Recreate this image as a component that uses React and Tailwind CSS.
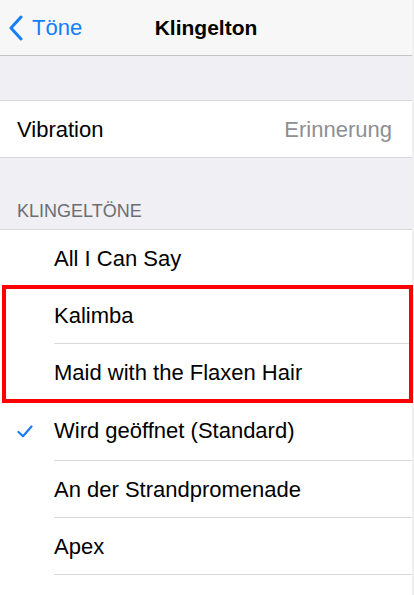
const font = { fontFamily: '"Liberation Sans", Arial, sans-serif' };

const Row = ({ label, checked, last, tall }) => (
  <div className={`flex ${tall ? "h-[60px]" : "h-[57px]"} items-stretch bg-white`}>
    <div className="flex w-[54px] shrink-0 items-center pl-[17px]">
      {checked && (
        <svg width="16" height="13" viewBox="0 0 16 13" fill="none">
          <path d="M1.5 7 L6 11.2 L14.5 1.5" stroke="#1a7cf5" strokeWidth="2.2" strokeLinecap="round" strokeLinejoin="round" />
        </svg>
      )}
    </div>
    <div className={`flex flex-1 items-center text-[22px] text-black ${last ? "" : "border-b border-[#dadade]"}`}>
      {label}
    </div>
  </div>
);

export default function App() {
  return (
    <div className="flex h-[595px] w-[414px] overflow-hidden bg-[#f0f0f0]" style={font}>
      <div className="flex w-[412px] flex-col bg-[#efeff4]">
        <div className="relative flex h-[56px] shrink-0 items-center justify-center border-b border-[#c4c4c8] bg-[#f7f7f7]">
          <div className="absolute left-[8px] top-0 flex h-full items-center gap-[8px] text-[#147efb]">
            <svg width="16" height="26" viewBox="0 0 16 26" fill="none">
              <path d="M13 2 L3 13 L13 24" stroke="#147efb" strokeWidth="3" strokeLinecap="round" strokeLinejoin="round" />
            </svg>
            <span className="text-[22px]">Töne</span>
          </div>
          <span className="text-[21px] font-bold text-black">Klingelton</span>
        </div>

        <div className="h-[45px] shrink-0 border-b border-[#d8d8dc]" />

        <div className="flex h-[57px] shrink-0 items-center justify-between border-b border-[#d8d8dc] bg-white pl-[17px] pr-[20px] text-[22px]">
          <span className="text-black">Vibration</span>
          <span className="text-[#8e8e93]">Erinnerung</span>
        </div>

        <div className="flex h-[72px] shrink-0 items-end border-b border-[#d8d8dc] px-[17px] pb-[9px] text-[18px] leading-none text-[#6d6d72]">
          KLINGELTÖNE
        </div>

        <div className="flex flex-col">
          <Row label="All I Can Say" />
          <div className="relative">
            <Row label="Kalimba" />
            <Row label="Maid with the Flaxen Hair" />
            <div className="absolute -bottom-[2px] -top-[2px] left-[2px] right-[-1px] border-[4px] border-[#ff0000]" />
          </div>
          <Row label="Wird geöffnet (Standard)" checked tall />
          <Row label="An der Strandpromenade" />
          <Row label="Apex" />
          <Row label="" last />
        </div>
      </div>
      <div className="w-[2px]" />
    </div>
  );
}
